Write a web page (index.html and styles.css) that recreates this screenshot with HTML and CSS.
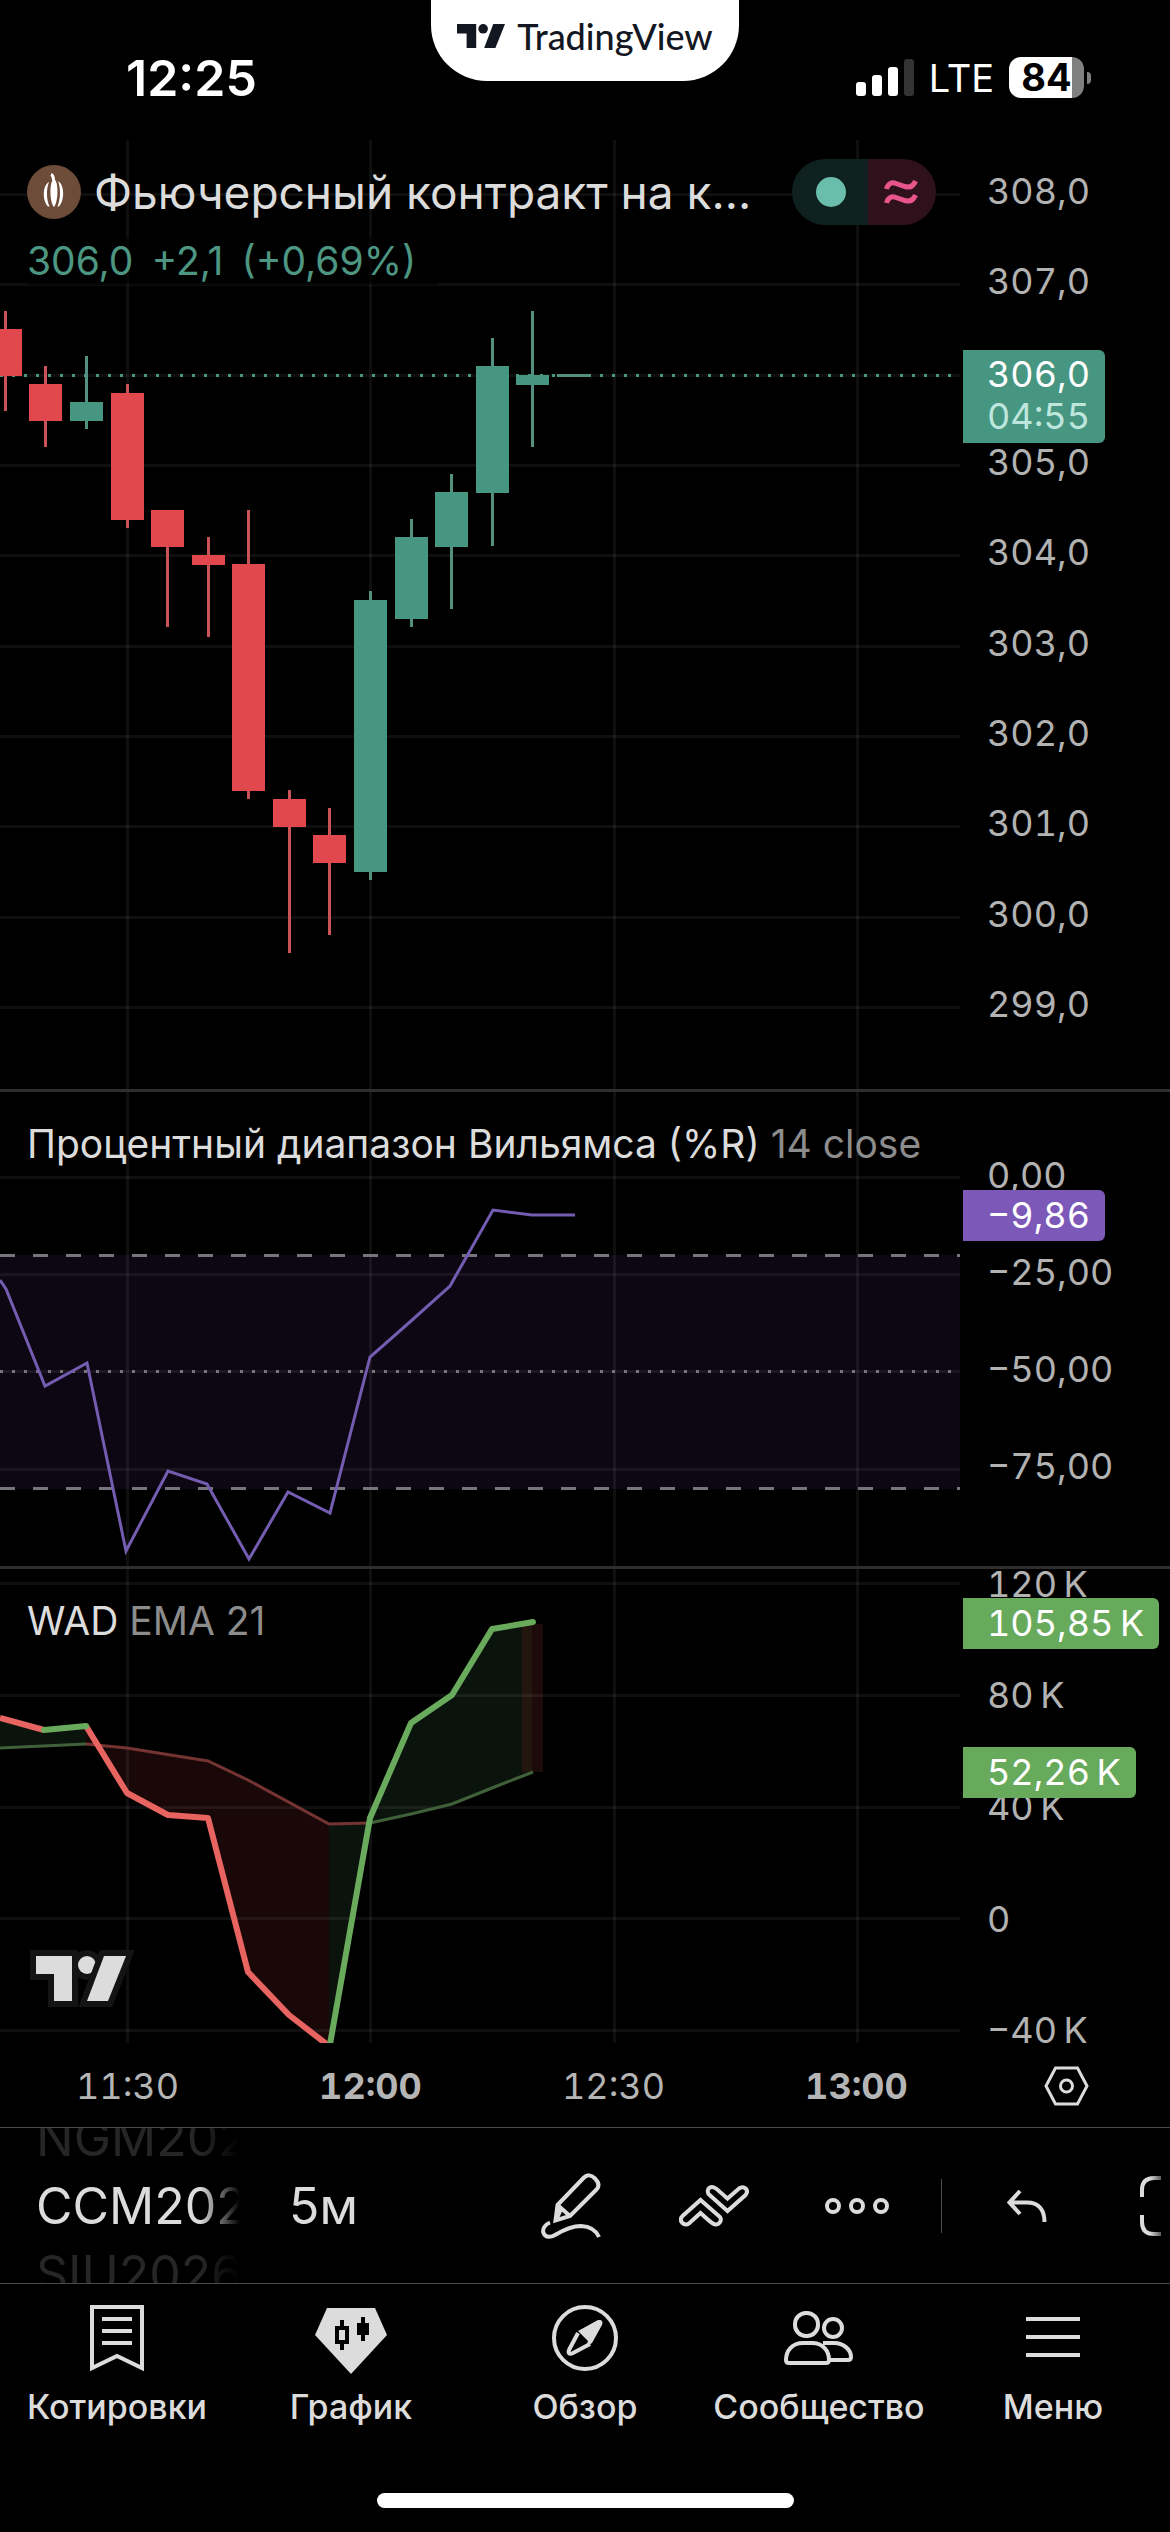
FILE: index.html
```html
<!DOCTYPE html>
<html lang="ru">
<head>
  <meta charset="UTF-8">
  <meta name="viewport" content="width=device-width, initial-scale=1.0">
  <title>TradingView - График</title>
  <link rel="stylesheet" href="styles.css">
</head>
<body>
  <header class="status-bar">
    <div class="clock">12:25</div>
    <div class="notch">
      <svg class="notch-logo" viewBox="0 0 90 45" aria-hidden="true">
        <path d="M0 0H36V45H18V18H0z"/><circle cx="49" cy="9" r="9"/><path d="M68 0H90L72 45H51z"/>
      </svg>
      <span>TradingView</span>
    </div>
    <div class="status-icons">
      <svg class="signal" viewBox="0 0 58 38" aria-hidden="true">
        <rect x="0" y="23" width="10" height="14" rx="3"/>
        <rect x="16" y="16" width="10" height="21" rx="3"/>
        <rect x="32" y="8" width="10" height="29" rx="3"/>
        <rect class="signal-off" x="48" y="0" width="10" height="37" rx="3"/>
      </svg>
      <span class="network">LTE</span>
      <div class="battery">84</div>
    </div>
  </header>

  <main>
    <!-- Цена -->
    <section class="pane">
      <svg class="plot" viewBox="0 140 960 949" aria-label="Свечной график">
        <g class="grid">
          <path d="M127.5 140V1089M370.5 140V1089M614.5 140V1089M857.5 140V1089"/>
          <path d="M0 194.5H960M0 284.5H960M0 375.5H960M0 465.5H960M0 555.5H960M0 646.5H960M0 736.5H960M0 826.5H960M0 917.5H960M0 1007.5H960"/>
        </g>
        <path class="last-price" d="M0 375.5H960"/>
        <g class="down">
          <path d="M5.5 311V411M45.5 366V447M127.5 384V528M167.5 510V627M208.5 537V637M248.5 510V799M289.5 790V953M329.5 808V935"/>
          <rect x="-11" y="329" width="33" height="47"/>
          <rect x="29" y="384" width="33" height="37"/>
          <rect x="111" y="393" width="33" height="127"/>
          <rect x="151" y="510" width="33" height="37"/>
          <rect x="192" y="555" width="33" height="10"/>
          <rect x="232" y="564" width="33" height="227"/>
          <rect x="273" y="799" width="33" height="28"/>
          <rect x="313" y="835" width="33" height="28"/>
        </g>
        <g class="up">
          <path d="M86.5 356V429M370.5 591V880M411.5 519V627M451.5 474V609M492.5 338V546M532.5 311V447M557 375.5H591"/>
          <rect x="70" y="402" width="33" height="19"/>
          <rect x="354" y="600" width="33" height="272"/>
          <rect x="395" y="537" width="33" height="82"/>
          <rect x="435" y="492" width="33" height="55"/>
          <rect x="476" y="366" width="33" height="127"/>
          <rect x="516" y="375" width="33" height="10"/>
        </g>
      </svg>
      <ul class="scale scale-price">
        <li>308,0</li><li>307,0</li><li>306,0</li><li>305,0</li><li>304,0</li>
        <li>303,0</li><li>302,0</li><li>301,0</li><li>300,0</li><li>299,0</li>
      </ul>
      <div class="tag tag-price">306,0<span>04:55</span></div>
      <div class="legend legend-price">
        <div class="symbol-row">
          <svg class="symbol-icon" viewBox="0 0 54 54" aria-hidden="true">
            <circle class="cocoa-bg" cx="27" cy="27" r="27"/>
            <path class="cocoa-stem" d="M24 9.5q2.500 1 2.500 6"/>
            <path d="M26 15c-3.500 3-3.500 22 1 27c4.500-5 4.500-24 1-27zM22 17c-7 4-6.500 19-1 24.500l1.500 0c-3-7-3.500-17-.5-24.500zM31 16c7 4 6.500 20 1 25.500l-1.500 0c3-7 3.500-18 .5-25.500z"/>
          </svg>
          <h1>Фьючерсный контракт на к...</h1>
          <div class="pill">
            <span class="pill-open"><i></i></span>
            <span class="pill-delay">
              <svg viewBox="0 0 32 24" aria-hidden="true"><path d="M1.500 9C3 3 7 2 11 3.500L20 6.500C25 8 28.500 6 30.500 1M1.500 23C3 17 7 16 11 17.500L20 20.500C25 22 28.500 20 30.500 15"/></svg>
            </span>
          </div>
        </div>
        <div class="quote"><span>306,0</span><span>+2,1</span><span>(+0,69%)</span></div>
      </div>
    </section>

    <!-- Williams %R -->
    <section class="pane pane-line">
      <svg class="plot" viewBox="0 1092 960 474" aria-label="Процентный диапазон Вильямса">
        <rect class="band" x="0" y="1255" width="960" height="234"/>
        <g class="grid">
          <path d="M127.5 1092V1566M370.5 1092V1566M614.5 1092V1566M857.5 1092V1566"/>
          <path d="M0 1177.5H960M0 1274.5H960M0 1371.5H960M0 1469.5H960"/>
        </g>
        <path class="level" d="M0 1255.5H960M0 1488.5H960"/>
        <path class="middle" d="M0 1371.5H960"/>
        <path class="percent-r" d="M0 1280L6 1289L45 1386L87 1363L126 1551L168 1471L207 1484L249 1559L288 1492L330 1513L370 1357L411 1321L450 1286L493 1210L532 1215H575"/>
      </svg>
      <ul class="scale scale-percent">
        <li>0,00</li><li>−25,00</li><li>−50,00</li><li>−75,00</li>
      </ul>
      <div class="tag tag-percent">−9,86</div>
      <h2 class="legend legend-study">Процентный диапазон Вильямса (%R) <small>14 close</small></h2>
    </section>

    <!-- WAD -->
    <section class="pane pane-line">
      <svg class="plot" viewBox="0 1569 960 474" aria-label="WAD EMA 21">
        <path class="fill-up" d="M0 1718L44 1730L86 1726V1744L0 1748z"/>
        <path class="fill-down" d="M86 1726L127 1793L168 1815L208 1818L248 1972L289 2015L329 2045V1824L248 1780L208 1761L127 1748L86 1744z"/>
        <path class="fill-up" d="M329 2045L370 1818L411 1723L452 1695L492 1629L532 1622V1772L492 1788L452 1804L411 1814L370 1823L329 1824z"/>
        <path class="fill-now" d="M522 1624H543V1772H522z"/>
        <g class="grid">
          <path d="M127.5 1569V2043M370.5 1569V2043M614.5 1569V2043M857.5 1569V2043"/>
          <path d="M0 1583.5H960M0 1695.5H960M0 1807.5H960M0 1918.5H960M0 2030.5H960"/>
        </g>
        <path class="ema-up" d="M0 1748L86 1744M370 1823L411 1814L452 1804L492 1788L533 1772"/>
        <path class="ema-down" d="M86 1744L127 1748L208 1761L248 1780L329 1824L370 1823"/>
        <path class="wad-down" d="M0 1718L44 1730M86 1726L127 1793L168 1815L208 1818L248 1972L289 2015L329 2046"/>
        <path class="wad-up" d="M44 1730L86 1726M329 2050L370 1818L411 1723L452 1695L492 1629L533 1622"/>
        <g class="watermark" transform="translate(36 1956)">
          <path d="M0 0H36V45H18V18H0z"/><circle cx="51" cy="9" r="9"/><path d="M68 0H90L72 45H51z"/>
        </g>
      </svg>
      <ul class="scale scale-wad">
        <li>120&thinsp;K</li><li>80&thinsp;K</li><li>40&thinsp;K</li><li>0</li><li>−40&thinsp;K</li>
      </ul>
      <div class="tag tag-wad">105,85&thinsp;K</div>
      <div class="tag tag-ema">52,26&thinsp;K</div>
      <h2 class="legend legend-study">WAD <small>EMA 21</small></h2>
    </section>

    <div class="time-axis">
      <ol>
        <li>11:30</li><li><b>12:00</b></li><li>12:30</li><li><b>13:00</b></li>
      </ol>
      <button class="axis-settings" aria-label="Настройки шкалы">
        <svg viewBox="0 0 45 40"><path d="M11.500 2H33.500L43 20L33.500 38H11.500L2 20z"/><circle cx="22.500" cy="20" r="6"/></svg>
      </button>
    </div>
  </main>

  <div class="toolbar">
    <div class="symbol-picker">
      <span>NGM2026</span>
      <span class="current">CCM2026</span>
      <span>SIU2026</span>
    </div>
    <button class="interval">5м</button>
    <div class="tools">
      <button class="tool" aria-label="Рисование">
        <svg width="60" height="66" viewBox="0 0 60 66">
          <path d="M16.500 32L43 4.500C46 1.500 50 1.500 54 5.500C58.500 10 58.500 13.500 55.500 16.500L29 43L14.500 47.500zM16.500 32L29 43M20 36L16 45"/>
          <path d="M9 49.500C4 51.500 1 56 2.500 60C4.500 65 10 64.500 14 62C24 56 31 53 40 53C49 53.500 55 57 58 64"/>
        </svg>
      </button>
      <button class="tool" aria-label="Индикаторы">
        <svg width="70" height="42" viewBox="0 0 70 42">
          <path d="M3.500 31L21.500 15L41 32C43 35 41 39.500 36.500 39.500C34.500 39.500 33 38.500 21.500 28L10 38.500C5 41.500 -1 36 3.500 31z"/>
          <path d="M48.500 26L29.500 9C27.500 5 30 2 33 2C35.500 2 36 2.500 48.500 13.500L60 3.500C65 0 70.500 5 66.500 10z"/>
        </svg>
      </button>
      <button class="tool" aria-label="Ещё">
        <svg width="64" height="16" viewBox="0 0 64 16"><circle cx="8" cy="8" r="6"/><circle cx="32" cy="8" r="6"/><circle cx="56" cy="8" r="6"/></svg>
      </button>
      <span class="divider"></span>
      <button class="tool" aria-label="Отменить">
        <svg width="40" height="32" viewBox="0 0 40 32"><path d="M13 1L2.500 12.500L13 24M3 12.500H20C32 12.500 37.500 20 37.500 32"/></svg>
      </button>
      <button class="tool tool-last" aria-label="Во весь экран">
        <svg width="21" height="60" viewBox="0 0 21 60"><path d="M2 21V14C2 6 6 2 14 2H26M2 39V46C2 54 6 58 14 58H26"/></svg>
      </button>
    </div>
  </div>

  <nav class="tabs">
    <a href="#">
      <svg viewBox="0 0 72 72"><path d="M11 5H61V66L36 54L11 66z"/><path d="M21 17H51M21 29H51M21 41H51"/></svg>
      Котировки
    </a>
    <a href="#" aria-current="page">
      <svg viewBox="0 0 72 72">
        <path class="gem" d="M12 6H60L72 33L36 72L0 33z"/>
        <path class="gem-wick" d="M27 18V25M27 42V48M48 15V39"/>
        <path class="gem-hollow" d="M22 26H32V40H22z"/>
        <path class="gem-solid" d="M42 21H54V33H42z"/>
      </svg>
      График
    </a>
    <a href="#">
      <svg viewBox="0 0 72 72">
        <circle cx="36" cy="36" r="31"/>
        <path d="M29 31L20.500 47C18.500 51 20 53 24 51L41 42"/>
        <path class="needle" d="M29 29L48 18.500C52 17 54.500 19 53 23L43 41L37 45L39 39L31 31z"/>
      </svg>
      Обзор
    </a>
    <a href="#">
      <svg viewBox="0 0 72 72">
        <rect x="12" y="11" width="23" height="23" rx="11"/>
        <rect x="41" y="17" width="18" height="18" rx="9"/>
        <path d="M20 41H29C40 41 46 49 46 58C46 60 45 61 43 61H6C4 61 3 60 3 58C3 49 9 41 20 41z"/>
        <path d="M40 41H51C61 41 68 48 68 55C68 57 67 58 65 58H46"/>
      </svg>
      Сообщество
    </a>
    <a href="#">
      <svg viewBox="0 0 72 72"><path d="M9 17H63M9 35H63M9 53H63"/></svg>
      Меню
    </a>
  </nav>
  <div class="home-indicator"></div>
</body>
</html>
```

FILE: styles.css
```css
* {
  box-sizing: border-box;
}

body {
  margin: 0;
  background-color: #000;
  color: #dcdcdc;
  font-family: Inter, "Noto Sans", sans-serif;
  font-size: 36px;
  overflow-x: hidden;
}

button {
  padding: 0;
  border: 0;
  background: none;
  color: inherit;
  font: inherit;
  cursor: pointer;
}

ul, ol {
  margin: 0;
  padding: 0;
  list-style: none;
}

svg {
  display: block;
  fill: none;
}

/* status bar */
.status-bar {
  display: grid;
  grid-template-columns: 1fr 308px 1fr;
  height: 140px;
  color: #fff;
}

.clock {
  padding: 49px 0 0 126px;
  font-size: 50px;
  font-weight: 600;
  line-height: 58px;
}

.notch {
  display: flex;
  align-items: center;
  justify-content: center;
  gap: 12px;
  height: 81px;
  padding-bottom: 9px;
  border-radius: 0 0 56px 56px;
  background-color: #fff;
  color: #131722;
  font-family: Lato, sans-serif;
  font-weight: 500;
}

.notch-logo {
  width: 48px;
  height: 24px;
  fill: #131722;
}

.status-icons {
  display: flex;
  align-items: center;
  justify-content: flex-end;
  height: 41px;
  margin: 57px 86px 0 0;
}

.signal {
  width: 58px;
  height: 38px;
  fill: #fff;
}

.signal-off {
  fill: #333;
}

.network {
  margin: 0 15px;
  font-size: 38px;
}

.battery {
  position: relative;
  width: 75px;
  height: 41px;
  border-radius: 12px;
  background: linear-gradient(to right, #fff 84%, #808080 84%);
  color: #000;
  font-size: 38px;
  font-weight: 700;
  line-height: 41px;
  text-align: center;
}

.battery::after {
  content: "";
  position: absolute;
  top: 15px;
  right: -7px;
  width: 4px;
  height: 12px;
  border-radius: 0 4px 4px 0;
  background-color: #808080;
}

/* panes */
.pane {
  display: flex;
  position: relative;
  overflow: hidden;
}

.pane-line {
  border-top: 3px solid #2e2e2e;
}

.plot {
  flex: 1;
  min-width: 0;
}

.grid {
  stroke: rgba(255, 255, 255, 0.06);
  stroke-width: 3;
}

.last-price {
  stroke: #469682;
  stroke-width: 3;
  stroke-dasharray: 3 9;
}

.up {
  fill: #469682;
  stroke: none;
}

.down {
  fill: #e0484d;
  stroke: none;
}

.up path {
  stroke: #549080;
  stroke-width: 3;
}

.down path {
  stroke: #c95356;
  stroke-width: 3;
}

.band {
  fill: #0c0713;
}

.level {
  stroke: #77747c;
  stroke-width: 3;
  stroke-dasharray: 15 18;
}

.middle {
  stroke: #77747c;
  stroke-width: 3;
  stroke-dasharray: 3 9;
}

.percent-r {
  stroke: #745cb0;
  stroke-width: 3;
}

.fill-up {
  fill: #0b140c;
}

.fill-down {
  fill: #1a0808;
}

.fill-now {
  fill: rgba(64, 24, 20, 0.45);
}

.ema-up {
  stroke: #40603a;
  stroke-width: 3;
}

.ema-down {
  stroke: #743432;
  stroke-width: 3;
}

.wad-up {
  stroke: #69aa5c;
  stroke-width: 6;
  stroke-linejoin: round;
  stroke-linecap: round;
}

.wad-down {
  stroke: #e86460;
  stroke-width: 6;
  stroke-linejoin: round;
}

.watermark {
  fill: #dcdcdc;
  stroke: #141414;
  stroke-width: 12;
  paint-order: stroke;
}

/* price scales */
.scale {
  display: flex;
  flex-direction: column;
  flex: 0 0 210px;
  color: #b2b2b2;
}

.scale, .tag, .time-axis {
  font-variant-numeric: tabular-nums;
}

.scale li {
  display: flex;
  flex: 1;
  align-items: center;
  padding-left: 27px;
}

.scale-price {
  padding: 6px 0 40px;
}

.scale-percent {
  padding: 34px 0 51px;
}

.scale-wad {
  margin: -41px 0 -43px;
}

.tag {
  position: absolute;
  left: calc(100% - 207px);
  min-width: 141px;
  padding: 0 15px 0 24px;
  border-radius: 0 6px 6px 0;
  background-color: #67aa5b;
  color: #fff;
  line-height: 51px;
}

.tag-price {
  top: 210px;
  padding-top: 3px;
  padding-bottom: 6px;
  background-color: #469682;
  line-height: 42px;
}

.tag-price span {
  display: block;
  color: #bfe6dc;
}

.tag-percent {
  top: 98px;
  background-color: #7c58b8;
}

.tag-wad {
  top: 29px;
}

.tag-ema {
  top: 178px;
}

/* legends over the plots */
.legend {
  position: absolute;
  left: 27px;
  margin: 0;
}

.legend-price {
  top: 19px;
}

.symbol-row {
  display: flex;
  align-items: center;
}

.symbol-icon {
  width: 54px;
  height: 54px;
  margin-right: 13px;
  fill: #fff;
}

.cocoa-bg {
  fill: #6d4c3a;
}

.cocoa-stem {
  fill: none;
  stroke: #fff;
  stroke-width: 3;
}

h1 {
  flex: 0 0 698px;
  margin: 0;
  font-size: 46px;
  font-weight: 400;
  line-height: 66px;
  white-space: nowrap;
}

.pill {
  display: flex;
  flex: 0 0 144px;
  height: 66px;
  overflow: hidden;
  border-radius: 33px;
}

.pill-open, .pill-delay {
  display: flex;
  flex: 1;
  align-items: center;
}

.pill-open {
  padding-left: 24px;
  background-color: #0f211e;
}

.pill-open i {
  width: 30px;
  height: 30px;
  border-radius: 50%;
  background-color: #6bbdab;
}

.pill-delay {
  padding-left: 17px;
  background-color: #2f111c;
}

.pill-delay svg {
  width: 32px;
  height: 24px;
  overflow: visible;
  stroke: #e8558a;
  stroke-width: 5;
}

.quote {
  display: flex;
  gap: 18px;
  width: 411px;
  margin-top: 12px;
  background-color: rgba(0, 0, 0, 0.6);
  color: #4d9682;
  font-size: 39px;
  line-height: 48px;
}

.legend-study {
  top: 28px;
  font-size: 39px;
  font-weight: 400;
  line-height: 48px;
  white-space: nowrap;
}

.legend-study small {
  color: #8c8c8c;
  font-size: 39px;
}

/* time axis */
.time-axis {
  display: flex;
  align-items: center;
  height: 84px;
  padding-top: 2px;
  color: #b5b5b5;
}

.time-axis ol {
  display: flex;
  flex: 1;
  min-width: 0;
  padding-left: 6px;
}

.time-axis li {
  flex: 0 0 243px;
  text-align: center;
}

.time-axis b {
  font-weight: 700;
}

.axis-settings {
  flex: 0 0 210px;
  padding-left: 84px;
}

.axis-settings svg {
  width: 45px;
  height: 40px;
  stroke: #dcdcdc;
  stroke-width: 3;
}

/* toolbar */
.toolbar {
  display: flex;
  align-items: center;
  height: 156px;
  overflow: hidden;
  border-top: 1px solid #4a4a4a;
  font-size: 50px;
}

.symbol-picker {
  flex: 0 0 240px;
  padding-left: 36px;
  overflow: hidden;
  color: #262626;
  line-height: 68px;
  -webkit-mask-image: linear-gradient(to right, #000 200px, transparent 240px);
  mask-image: linear-gradient(to right, #000 200px, transparent 240px);
}

.symbol-picker span {
  display: block;
}

.symbol-picker .current {
  color: #dcdcdc;
}

.interval {
  margin-left: 49px;
}

.tools {
  display: flex;
  align-items: center;
  margin: 0 9px 0 auto;
}

.tool {
  display: flex;
  justify-content: center;
  width: 143px;
}

.tool svg {
  stroke: #dcdcdc;
  stroke-width: 4;
}

.tool-last {
  justify-content: flex-end;
  width: 63px;
  -webkit-mask-image: linear-gradient(to right, #000 52px, rgba(0, 0, 0, 0.4));
  mask-image: linear-gradient(to right, #000 52px, rgba(0, 0, 0, 0.4));
}

.divider {
  width: 1px;
  height: 54px;
  margin: 0 13px;
  background-color: #4a4a4a;
}

/* bottom tabs */
.tabs {
  display: flex;
  border-top: 1px solid #4a4a4a;
}

.tabs a {
  display: flex;
  flex: 1 1 0;
  flex-direction: column;
  align-items: center;
  gap: 12px;
  min-width: 0;
  padding-top: 18px;
  color: #dcdcdc;
  font-size: 34px;
  font-weight: 500;
  line-height: 42px;
  text-decoration: none;
}

.tabs svg {
  width: 72px;
  height: 72px;
  stroke: #dcdcdc;
  stroke-width: 4;
}

.tabs .gem {
  fill: #dcdcdc;
  stroke: none;
}

.tabs .gem-wick, .tabs .gem-hollow {
  stroke: #000;
}

.tabs .gem-solid {
  fill: #000;
  stroke: none;
}

.tabs .needle {
  fill: #dcdcdc;
  stroke: none;
}

.home-indicator {
  width: 417px;
  height: 15px;
  margin: 65px auto 24px;
  border-radius: 8px;
  background-color: #fff;
}
```
